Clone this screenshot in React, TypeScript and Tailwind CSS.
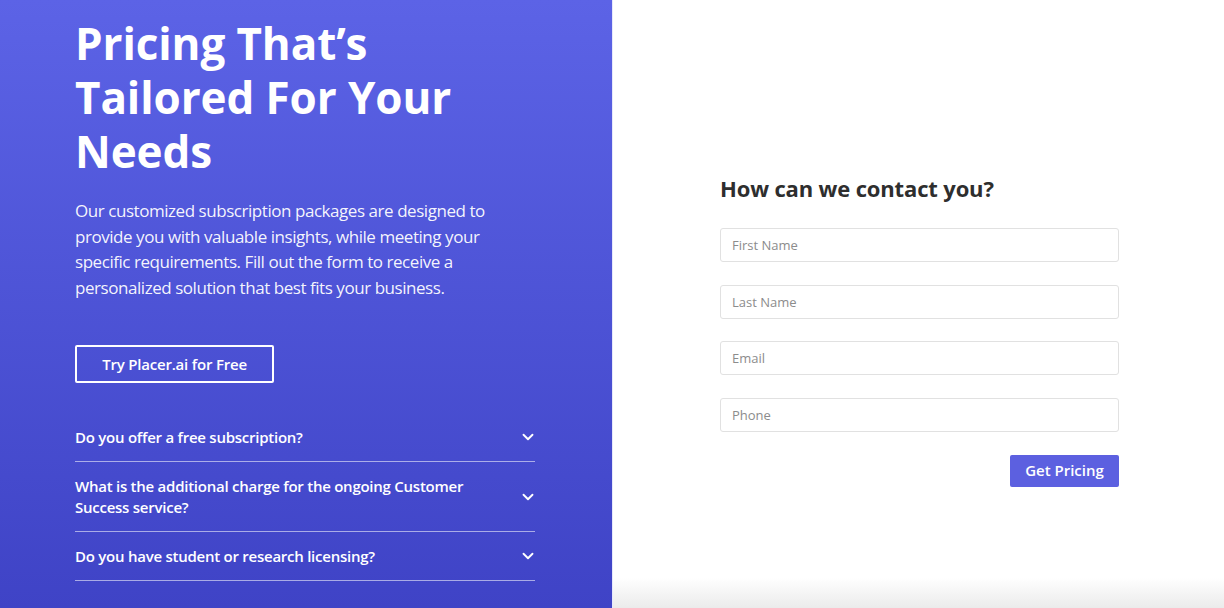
import { ChevronDown } from "lucide-react";

const faqs = [
  "Do you offer a free subscription?",
  "What is the additional charge for the ongoing Customer Success service?",
  "Do you have student or research licensing?",
];

const fields = ["First Name", "Last Name", "Email", "Phone"];

export default function App() {
  return (
    <div
      className="flex h-[608px] w-[1224px] overflow-hidden"
      style={{ fontFamily: '"Open Sans", "Liberation Sans", sans-serif' }}
    >
      {/* LEFT */}
      <div className="flex w-[612px] shrink-0 flex-col bg-linear-to-b from-[#5c63e6] to-[#3f43c6] pl-[75px] pt-[16px] text-white">
        <h1 className="text-[44px] font-bold leading-[54px] tracking-[-0.1px]">
          Pricing That’s
          <br />
          Tailored For Your
          <br />
          Needs
        </h1>

        <p className="mt-[20px] w-[425px] text-[17px] leading-[25.5px] tracking-[-0.45px] text-white/95">
          Our customized subscription packages are designed to provide you with
          valuable insights, while meeting your specific requirements. Fill out
          the form to receive a personalized solution that best fits your
          business.
        </p>

        <div className="mt-[45px]">
          <button className="h-[38px] w-[199px] rounded-[2px] border-2 border-white text-[15px] font-semibold tracking-[-0.2px]">
            Try Placer.ai for Free
          </button>
        </div>

        <div className="mt-[30px] w-[460px]">
          {faqs.map((q) => (
            <div
              key={q}
              className="flex items-center justify-between border-b border-white/55 py-[13.5px]"
            >
              <span className="w-[410px] text-[15px] font-semibold leading-[21px] tracking-[-0.25px]">
                {q}
              </span>
              <ChevronDown size={18} strokeWidth={2.5} className="mr-[-2px]" />
            </div>
          ))}
        </div>
      </div>

      {/* RIGHT */}
      <div className="flex flex-1 flex-col border-l border-[#e6e8fb] bg-linear-to-b from-white from-[95%] to-[#ebebeb] pl-[107px] pt-[173px]">
        <h2 className="text-[22px] font-bold leading-[30px] tracking-[-0.15px] text-[#2e2e2e]">
          How can we contact you?
        </h2>

        <div className="mt-[25px] flex w-[399px] flex-col gap-[22.5px]">
          {fields.map((f) => (
            <input
              key={f}
              placeholder={f}
              className="h-[34px] rounded-[3px] border border-[#e1e1e1] bg-white px-[11px] text-[13px] text-[#333] outline-none placeholder:text-[#8c8c8c]"
            />
          ))}
        </div>

        <div className="mt-[23px] flex w-[399px] justify-end">
          <button className="h-[32px] w-[109px] rounded-[2px] bg-[#5c60e0] text-[15px] font-semibold text-white">
            Get Pricing
          </button>
        </div>
      </div>
    </div>
  );
}
